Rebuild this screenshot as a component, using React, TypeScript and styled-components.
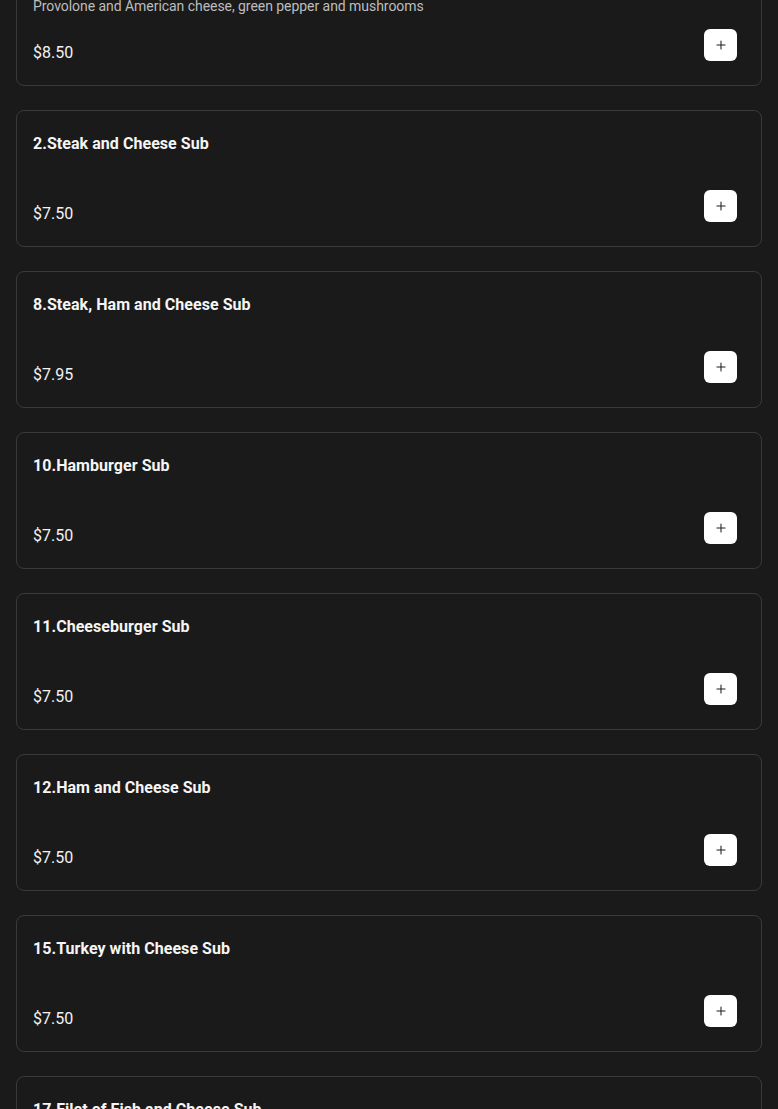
import styled, { createGlobalStyle } from "styled-components";
import { Plus } from "lucide-react";

const GlobalStyle = createGlobalStyle`
    html, body {
        margin: 0;
        padding: 0;
        background: #1a1a1a;
        font-family: Roboto, "Liberation Sans", sans-serif;
        color: #ffffff;
    }
`;

// the page is scrolled, first card starts above the viewport
const List = styled.div`
    display: flex;
    flex-direction: column;
    gap: 24px;
    padding: 0 16px 40px;
    margin-top: -51px;
`;

const Card = styled.div`
    display: flex;
    flex-direction: column;
    background: #1a1a1a;
    border: 1px solid #3a3a3a;
    border-radius: 8px;
    padding: 21px 24px 20px 16px;
`;

const Title = styled.div`
    font-size: 16px;
    font-weight: 700;
    line-height: 24px;
    letter-spacing: 0.05px;
    color: #f5f5f5;
`;

const Desc = styled.div`
    margin-top: 1px;
    min-height: 20px;
    font-size: 14px;
    line-height: 20px;
    letter-spacing: -0.05px;
    color: #bdbdbd;
`;

const Bottom = styled.div`
    display: flex;
    justify-content: space-between;
    margin-top: 13px;
    min-height: 36px;
`;

const Price = styled.span`
    align-self: flex-end;
    font-size: 16px;
    line-height: 24px;
    color: #f2f2f2;
`;

const AddButton = styled.button`
    align-self: flex-start;
    width: 33px;
    height: 32px;
    border: none;
    border-radius: 6px;
    background: #ffffff;
    color: #1e1e1e;
    display: flex;
    align-items: center;
    justify-content: center;
    padding: 0;
    cursor: pointer;
`;

const items = [
    { name: "1.Cheese Steak Sub", desc: "Provolone and American cheese, green pepper and mushrooms", price: "$8.50" },
    { name: "2.Steak and Cheese Sub", desc: "", price: "$7.50" },
    { name: "8.Steak, Ham and Cheese Sub", desc: "", price: "$7.95" },
    { name: "10.Hamburger Sub", desc: "", price: "$7.50" },
    { name: "11.Cheeseburger Sub", desc: "", price: "$7.50" },
    { name: "12.Ham and Cheese Sub", desc: "", price: "$7.50" },
    { name: "15.Turkey with Cheese Sub", desc: "", price: "$7.50" },
    { name: "17.Filet of Fish and Cheese Sub", desc: "", price: "$7.50" },
];

export default function App() {
    return (
        <>
            <GlobalStyle />
            <List>
                {items.map((item) => (
                    <Card key={item.name}>
                        <Title>{item.name}</Title>
                        <Desc>{item.desc}</Desc>
                        <Bottom>
                            <Price>{item.price}</Price>
                            <AddButton aria-label="add">
                                <Plus size={14} strokeWidth={1.8} />
                            </AddButton>
                        </Bottom>
                    </Card>
                ))}
            </List>
        </>
    );
}
